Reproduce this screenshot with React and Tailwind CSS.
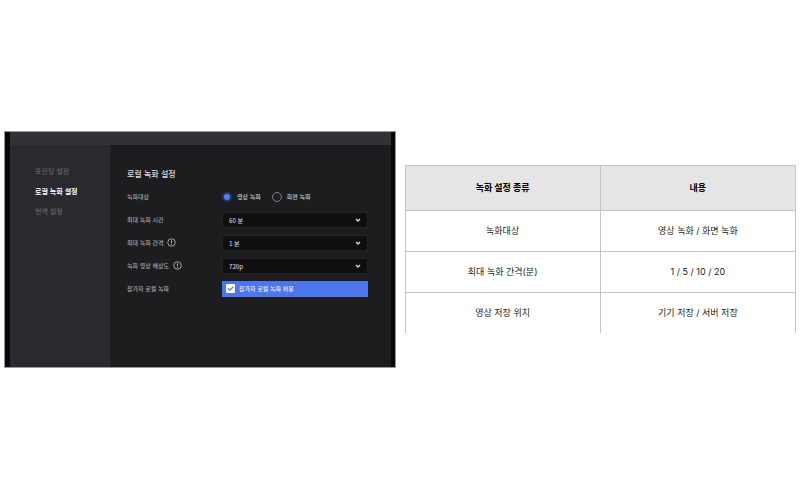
import React, { useState } from "react";

const menuItems = ["포인팅 설정", "로컬 녹화 설정", "번역 설정"];

const selectFields = [
  {
    id: "maxTime",
    label: "최대 녹화 시간",
    options: ["60 분", "30 분"],
  },
  {
    id: "interval",
    label: "최대 녹화 간격",
    help: true,
    options: ["1 분", "5 분", "10 분", "20 분"],
  },
  {
    id: "resolution",
    label: "녹화 영상 해상도",
    help: true,
    options: ["720p", "1080p"],
  },
];

const tableRows = [
  ["녹화대상", "영상 녹화 / 화면 녹화"],
  ["최대 녹화 간격(분)", "1 / 5 / 10 / 20"],
  ["영상 저장 위치", "기기 저장 / 서버 저장"],
];

const HelpIcon = () => (
  <svg viewBox="0 0 18 18" className="w-[9px] h-[9px]" fill="none">
    <circle cx="9" cy="9" r="7.5" stroke="#b4b4b6" strokeWidth="1.8" />
    <path d="M9 4.8v5" stroke="#b4b4b6" strokeWidth="2" />
    <circle cx="9" cy="12.4" r="1.2" fill="#b4b4b6" />
  </svg>
);

const SelectField = ({ id, label, help, options }) => {
  const [value, setValue] = useState(options[0]);

  return (
    <div className="flex items-center h-4">
      <div className="flex items-center gap-1 w-[95px] shrink-0">
        <label htmlFor={id} className="text-[#a3a3a5]">
          {label}
        </label>
        {help && <HelpIcon />}
      </div>
      <div className="relative grow h-4">
        <select
          id={id}
          value={value}
          onChange={(e) => setValue(e.target.value)}
          className="block w-full h-4 appearance-none border border-[#232325] bg-[#0f0f11] pl-[6px] text-[#d0d0d2] outline-none"
        >
          {options.map((option) => (
            <option key={option}>{option}</option>
          ))}
        </select>
        <svg
          viewBox="0 0 12 12"
          className="absolute right-[7px] top-[5px] w-[6px] h-[6px] pointer-events-none"
          fill="none"
        >
          <path d="M2 4l4 4 4-4" stroke="#d8d8da" strokeWidth="2.6" />
        </svg>
      </div>
    </div>
  );
};

const RadioOption = ({ value, target, onSelect }) => (
  <label className="flex items-center gap-[5px] text-[#c8c8ca]">
    <input
      type="radio"
      name="target"
      checked={target === value}
      onChange={() => onSelect(value)}
      className="w-[10px] h-[10px] appearance-none rounded-full border border-[#808084] checked:border-2 checked:border-[#263767] checked:bg-[#4f7ff7]"
    />
    {value}
  </label>
);

const SettingsPanel = () => {
  const [active, setActive] = useState("로컬 녹화 설정");
  const [target, setTarget] = useState("영상 녹화");
  const [allowed, setAllowed] = useState(true);

  return (
    <section className="border border-[#98989a] bg-[#1d1d1f] text-[6px] leading-4 font-medium">
      <div className="border-l-5 border-r-4 border-[#07080b]">
        <div className="h-[13px] bg-[#313136]" />
        <div className="flex">
          <nav className="flex flex-col items-start gap-1 w-[100px] shrink-0 bg-[#29292e] pl-[25px] pt-[18px] text-[7px]">
            {menuItems.map((item) => (
              <button
                key={item}
                type="button"
                onClick={() => setActive(item)}
                className={
                  active === item
                    ? "h-4 font-bold text-white cursor-pointer"
                    : "h-4 text-[#68686c] cursor-pointer"
                }
              >
                {item}
              </button>
            ))}
          </nav>

          <div className="grow flex flex-col gap-[7px] pl-[17px] pr-[23px] pt-[21px] pb-[70px]">
            <h2 className="h-4 text-[8px] text-[#dededf]">로컬 녹화 설정</h2>

            <div className="flex items-center h-4">
              <span className="w-[95px] shrink-0 text-[#a3a3a5]">녹화대상</span>
              <div className="flex gap-[11px]">
                <RadioOption
                  value="영상 녹화"
                  target={target}
                  onSelect={setTarget}
                />
                <RadioOption
                  value="화면 녹화"
                  target={target}
                  onSelect={setTarget}
                />
              </div>
            </div>

            {selectFields.map((field) => (
              <SelectField key={field.id} {...field} />
            ))}

            <div className="flex items-center h-4">
              <span className="w-[95px] shrink-0 text-[#a3a3a5]">
                참가자 로컬 녹화
              </span>
              <label className="relative grow flex items-center gap-1 h-4 bg-[#4d76ec] pl-1 text-[#e8edfd]">
                <input
                  type="checkbox"
                  checked={allowed}
                  onChange={() => setAllowed(!allowed)}
                  className="w-[9px] h-[9px] appearance-none rounded-[1px] bg-white"
                />
                {allowed && (
                  <svg
                    viewBox="0 0 18 18"
                    className="absolute left-1 w-[9px] h-[9px] pointer-events-none"
                    fill="none"
                  >
                    <path
                      d="M4 8.5l4 4 6.5-7"
                      stroke="#4d76ec"
                      strokeWidth="2.4"
                    />
                  </svg>
                )}
                참가자 로컬 녹화 허용
              </label>
            </div>
          </div>
        </div>
      </div>
    </section>
  );
};

const App = () => {
  return (
    <main
      lang="ko"
      className="min-h-screen grid grid-cols-2 items-center gap-[9px] bg-white px-1 pb-[2px] font-['Noto_Sans_CJK_KR',sans-serif]"
    >
      <SettingsPanel />

      <table className="w-full table-fixed border-collapse border-x border-t border-[#c4c4c4] text-center text-[9px] text-[#222] font-['Inter','Noto_Sans_CJK_KR',sans-serif]">
        <thead>
          <tr className="h-[45px] bg-[#e5e5e5] text-black">
            <th className="border border-[#c4c4c4] font-bold">
              녹화 설정 종류
            </th>
            <th className="border border-[#c4c4c4] font-bold">내용</th>
          </tr>
        </thead>
        <tbody>
          {tableRows.map(([name, content]) => (
            <tr key={name} className="h-[41px]">
              <td className="border-x border-t border-[#c4c4c4]">{name}</td>
              <td className="border-x border-t border-[#c4c4c4]">{content}</td>
            </tr>
          ))}
        </tbody>
      </table>
    </main>
  );
};

export default App;
